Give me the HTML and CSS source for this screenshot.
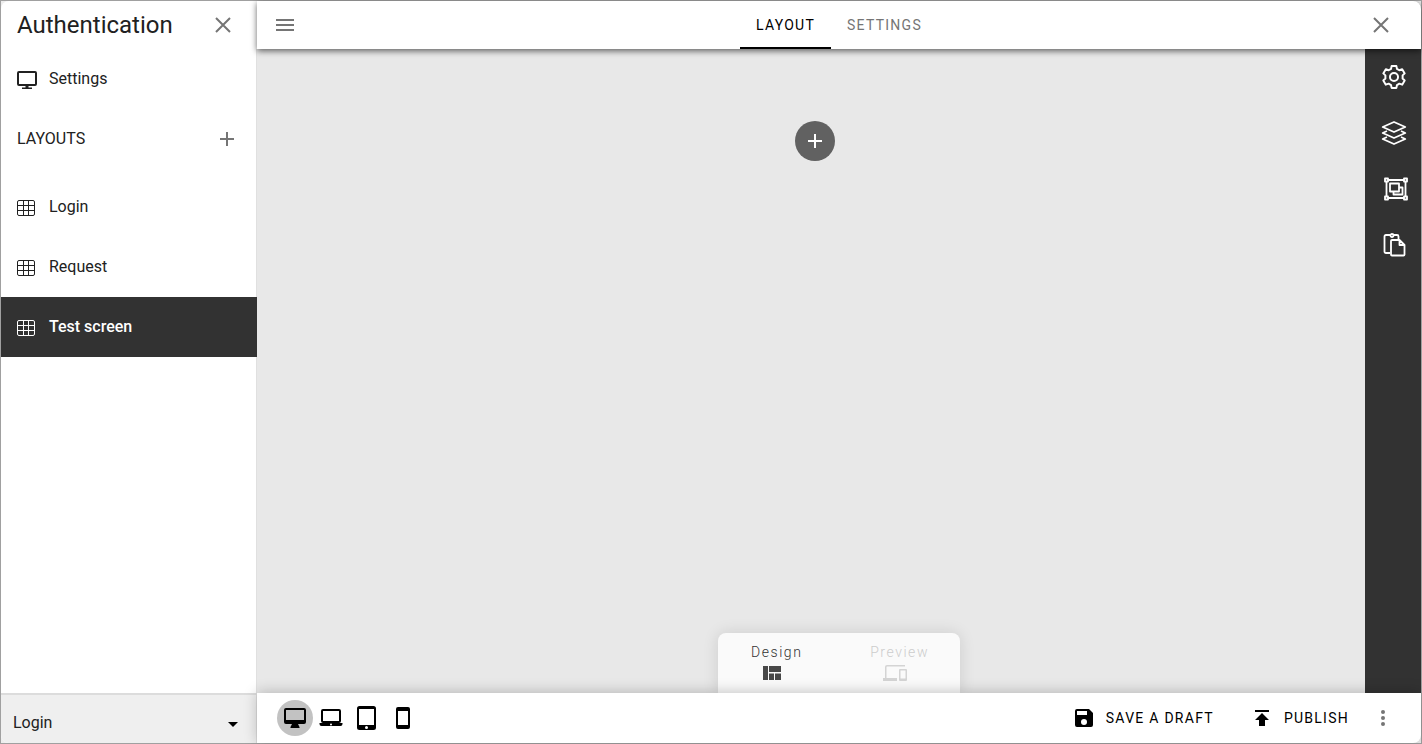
FILE: index.html
```html
<!DOCTYPE html>
<html lang="en">
<head>
<meta charset="utf-8">
<title>Authentication</title>
<link rel="stylesheet" href="styles.css">
</head>
<body>
<svg class="sprite" aria-hidden="true">
  <symbol id="close" viewBox="0 0 24 24"><path d="M5 5l14 14M19 5L5 19" fill="none" stroke="currentColor" stroke-width="2"/></symbol>
  <symbol id="plus" viewBox="0 0 24 24"><path d="M12 5v14M5 12h14" fill="none" stroke="currentColor" stroke-width="2"/></symbol>
  <symbol id="grid" viewBox="0 0 18 16"><rect x=".5" y=".5" width="17" height="15" rx="1.500" fill="none" stroke="currentColor"/><path d="M.5 5.500h17M.5 10.500h17M6.500 .5v15M11.500 .5v15" fill="none" stroke="currentColor"/></symbol>
</svg>
<div class="app">
  <aside class="sidebar">
    <header class="sidebar-head">
      <h1 class="title">Authentication</h1>
      <button class="icon-button" aria-label="Close menu"><svg class="icon"><use href="#close"/></svg></button>
    </header>
    <nav class="nav">
      <a class="nav-item" href="#settings">
        <svg class="nav-icon screen" viewBox="0 0 20 18"><path d="M2 1h16q1 0 1 1v11q0 1-1 1H2q-1 0-1-1V2q0-1 1-1z" fill="none" stroke="currentColor" stroke-width="2"/><path d="M8.500 14h3v2.500H15V18H5v-1.500h3.500z" fill="currentColor"/></svg>
        <span class="label">Settings</span>
      </a>
      <div class="section-head">
        <h2 class="section-title label">LAYOUTS</h2>
        <button class="icon-button" aria-label="Add layout"><svg class="icon"><use href="#plus"/></svg></button>
      </div>
      <ul class="layouts">
        <li><a class="nav-item" href="#login"><svg class="nav-icon"><use href="#grid"/></svg><span class="label">Login</span></a></li>
        <li><a class="nav-item" href="#request"><svg class="nav-icon"><use href="#grid"/></svg><span class="label">Request</span></a></li>
        <li><a class="nav-item active" href="#test" aria-current="page"><svg class="nav-icon"><use href="#grid"/></svg><span class="label">Test screen</span></a></li>
      </ul>
    </nav>
    <div class="picker">
      <select class="picker-select" aria-label="Start layout"><option>Login</option><option>Request</option><option>Test screen</option></select>
      <svg class="picker-arrow" viewBox="0 0 10 5"><path d="M0 0h10L5 5z"/></svg>
    </div>
  </aside>
  <div class="editor">
    <header class="topbar">
      <button class="icon-button" aria-label="Menu"><svg class="icon" viewBox="0 0 24 24"><path d="M3 7h18M3 12h18M3 17h18" stroke="currentColor" stroke-width="2"/></svg></button>
      <nav class="tabs">
        <button class="tab selected">LAYOUT</button>
        <button class="tab">SETTINGS</button>
      </nav>
      <button class="icon-button" aria-label="Close editor"><svg class="icon"><use href="#close"/></svg></button>
    </header>
    <div class="workspace">
      <main class="canvas">
        <button class="add" aria-label="Add element"><svg class="icon"><use href="#plus"/></svg></button>
      </main>
      <aside class="tools">
        <button class="tool" aria-label="Options"><svg class="tool-icon" viewBox="1 0 22 22"><path d="M9.300 3.500L9.800 1h4.400l.5 2.500 2.200 1.300 2.600-.9 2.300 3.800-1.900 1.800v2.900l1.900 1.800-2.300 3.800-2.600-.9-2.200 1.300-.5 2.600H9.800l-.5-2.600-2.200-1.300-2.600.9-2.300-3.800 1.900-1.800V9.500L2.200 7.700l2.300-3.800 2.600.9z"/><circle cx="12" cy="11" r="3.700"/></svg></button>
        <button class="tool" aria-label="Layers"><svg class="tool-icon" viewBox="0 0 24 24"><path d="M12 1l11.300 5L12 11 .7 6z"/><path d="M5 10L.7 12 12 17l11.300-5L19 10M5 16L.7 18 12 23l11.300-5-4.300-2"/></svg></button>
        <button class="tool" aria-label="Group"><svg class="tool-icon shifted" viewBox="0 0 24 24"><path d="M4 3h16M4 21h16M2.500 5v14M21.500 5v14M6 6.500h9v8H6zM15 10.500h3.500v7H9.500v-3"/><path d="M1 1.500h3v3H1zM20 1.500h3v3h-3zM1 19.500h3v3H1zM20 19.500h3v3h-3z"/></svg></button>
        <button class="tool" aria-label="Paste"><svg class="tool-icon" viewBox="0 0 24 24"><path d="M8 20H4q-1.500 0-1.500-1.500v-15Q2.500 2 4 2h4.500M11.500 2H15q1.500 0 1.500 1.500V6M10 7h7.500l5 5v9.500q0 1-1 1H10q-1 0-1-1V8q0-1 1-1zM17.500 7v5h5"/><circle cx="10" cy="2.500" r="1.500"/></svg></button>
      </aside>
      <div class="mode">
        <button class="mode-option">Design
          <svg class="mode-icon" viewBox="0 0 18 14"><path d="M0 0h5v14H0zM6 0h12v6H6zM6 7.500h5V14H6zM12 7.500h6V14h-6z"/></svg>
        </button>
        <button class="mode-option muted">Preview
          <svg class="mode-icon wide" viewBox="0 0 24 16"><path d="M4 1.500h18V0H4Q2 0 2 2v11H0v3h14v-3H3.500V2zM23 4h-6q-1 0-1 1v10q0 1 1 1h6q1 0 1-1V5q0-1-1-1zm-.5 9.500h-5v-8h5z"/></svg>
        </button>
      </div>
    </div>
    <footer class="bottombar">
      <div class="devices">
        <button class="device current" aria-label="Desktop"><svg class="icon" viewBox="0 0 24 24"><path d="M3 2h18q2 0 2 2v12q0 2-2 2h-6l1.500 3v1h-9v-1L9 18H3q-2 0-2-2V4q0-2 2-2zm0 2v10h18V4z"/></svg></button>
        <button class="device" aria-label="Laptop"><svg class="icon" viewBox="0 0 24 24"><path d="M4 3h16q2 0 2 2v10q0 2-2 2h3.500v1q0 2-2 2h-19q-2 0-2-2v-1H4q-2 0-2-2V5q0-2 2-2zm0 2v10h16V5zm8 12.500a1 1 0 1 0 0 2 1 1 0 0 0 0-2z"/></svg></button>
        <button class="device" aria-label="Tablet"><svg class="icon" viewBox="0 0 24 24"><path d="M4.500 0h14q2.500 0 2.500 2.500v19q0 2.500-2.500 2.500h-14Q2 24 2 21.500v-19Q2 0 4.500 0zM4 3v16h15V3zm7.500 17a1.500 1.500 0 1 0 0 3 1.500 1.500 0 0 0 0-3z"/></svg></button>
        <button class="device" aria-label="Phone"><svg class="icon" viewBox="0 0 24 24"><path d="M7 1h10q2 0 2 2v18q0 2-2 2H7q-2 0-2-2V3q0-2 2-2zm0 4v14h10V5z"/></svg></button>
      </div>
      <div class="actions">
        <button class="action"><svg class="icon" viewBox="0 0 24 24"><path d="M17 3H5a2 2 0 0 0-2 2v14a2 2 0 0 0 2 2h14a2 2 0 0 0 2-2V7zm-5 16a3 3 0 1 1 0-6 3 3 0 0 1 0 6zm3-10H5V5h10z"/></svg>SAVE A DRAFT</button>
        <button class="action"><svg class="icon" viewBox="0 0 24 24"><path d="M5 4h14v2H5zM5 14h4v6h6v-6h4l-7-7z"/></svg>PUBLISH</button>
        <button class="icon-button" aria-label="More"><svg class="icon" viewBox="0 0 24 24"><circle cx="12" cy="6" r="2"/><circle cx="12" cy="12" r="2"/><circle cx="12" cy="18" r="2"/></svg></button>
      </div>
    </footer>
  </div>
</div>
</body>
</html>
```
FILE: styles.css
```css
* { box-sizing: border-box; }
body { margin: 0; font-family: Roboto, "Liberation Sans", sans-serif; font-size: 16px; color: #212121; background: #ededed; }
button { border: 0; padding: 0; background: none; font: inherit; color: inherit; cursor: pointer; }
.sprite { display: none; }
.app { display: flex; min-height: 100vh; border: 1px solid #a0a0a0; }
.icon { display: block; width: 24px; height: 24px; fill: currentColor; }
.icon-button { display: grid; place-items: center; width: 24px; height: 24px; color: #757575; }

.sidebar { display: flex; flex-direction: column; flex: 0 0 256px; background: #fff; border-radius: 8px 0 0 8px; overflow: hidden; }
.sidebar-head { display: flex; align-items: center; justify-content: space-between; height: 48px; padding: 0 22px 0 16px; }
.title { margin: 0; font-size: 24px; font-weight: 400; }
.nav { flex: 1; box-shadow: inset -1px 0 #e0e0e0; }
.nav-item { display: flex; align-items: center; gap: 14px; height: 60px; padding: 0 16px; color: inherit; text-decoration: none; }
.label { padding-bottom: 2px; }
.nav-icon { width: 18px; height: 16px; margin-top: 2px; }
.nav-icon.screen { width: 20px; height: 18px; margin-right: -2px; }
.nav-item.active { background: #323232; color: #fff; font-weight: 500; }
.section-head { display: flex; align-items: center; justify-content: space-between; height: 60px; padding: 0 18px 0 16px; }
.section-title { margin: 0; font-size: 16px; font-weight: 400; }
.layouts { list-style: none; margin: 0; padding: 8px 0 0; }
.picker { position: relative; height: 50px; border-top: 2px solid #dcdcdc; border-right: 1px solid #dcdcdc; background: #efefef; }
.picker-select { appearance: none; width: 100%; height: 100%; padding: 6px 12px 0; border: 0; background: none; font: inherit; color: inherit; }
.picker-arrow { position: absolute; right: 18px; top: 27px; width: 10px; height: 5px; pointer-events: none; fill: #000; }

.editor { display: flex; flex: 1; flex-direction: column; min-width: 0; }
.topbar { z-index: 2; display: flex; align-items: center; justify-content: space-between; height: 48px; padding: 0 28px 0 16px; background: #fff; border-radius: 0 8px 0 0; box-shadow: 0 2px 6px rgba(0, 0, 0, .6); }
.tabs { display: flex; align-self: stretch; margin-left: 12px; }
.tab { padding: 2px 16px 0; border-bottom: 2px solid transparent; font-size: 14px; letter-spacing: .09em; color: #757575; }
.tab.selected { border-color: #000; color: #000; }
.workspace { position: relative; display: flex; flex: 1; }
.canvas { flex: 1; padding: 72px 0 0 8px; background: #e8e8e8; }
.add { display: grid; place-items: center; width: 40px; height: 40px; margin: 0 auto; border-radius: 50%; background: #616161; color: #fff; }
.tools { width: 56px; background: #323232; }
.tool { display: grid; place-items: center; width: 56px; height: 56px; padding-left: 2px; color: #fff; }
.tool-icon { width: 24px; height: 24px; overflow: visible; fill: none; stroke: currentColor; stroke-width: 1.8; stroke-linejoin: round; }
.tool-icon.shifted { margin-left: 4px; }
.mode { position: absolute; left: 0; right: 0; bottom: 0; display: flex; justify-content: space-between; width: 242px; height: 60px; margin: 0 auto; padding: 10px 31px 0 33px; border-radius: 8px 8px 0 0; background: #fafafa; box-shadow: 0 0 16px rgba(0, 0, 0, .12); }
.mode-option { display: flex; flex-direction: column; align-items: center; height: 40px; font-size: 14px; font-weight: 300; line-height: 18px; letter-spacing: .11em; color: #333; }
.mode-option.muted { color: #ccc; }
.mode-icon { width: 18px; height: 14px; margin: 5px 10px 0 0; overflow: visible; fill: #484848; }
.mode-icon.wide { width: 24px; height: 16px; margin-top: 4px; fill: #d4d4d4; }
.bottombar { z-index: 1; display: flex; align-items: center; justify-content: space-between; height: 50px; padding: 0 26px 0 20px; background: #fff; border-radius: 0 0 8px 0; box-shadow: 0 -1px 14px rgba(0, 0, 0, .22); }
.devices { display: flex; color: #000; }
.device { display: grid; place-items: center; width: 36px; height: 36px; border-radius: 50%; }
.device.current { background: #c2c2c2; }
.actions { display: flex; align-items: center; }
.action { display: flex; align-items: center; gap: 10px; margin-right: 36px; font-size: 14px; letter-spacing: .09em; color: #000; }
.action + .icon-button { margin-left: -14px; }
```
